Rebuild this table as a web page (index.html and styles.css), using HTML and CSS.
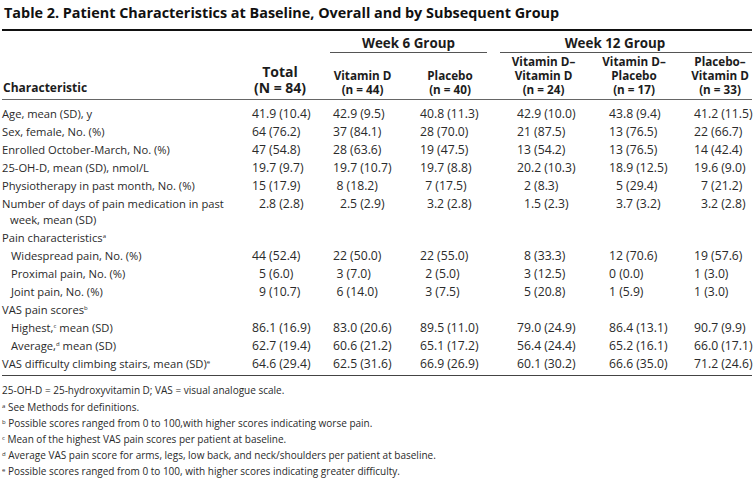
FILE: index.html
```html
<!DOCTYPE html>
<html lang="en">
<head>
<meta charset="utf-8">
<title>Table 2</title>
<link rel="stylesheet" href="styles.css">
</head>
<body>
<div class="page">
  <h1 class="title">Table 2. Patient Characteristics at Baseline, Overall and by Subsequent Group</h1>
  <table class="tbl">
    <colgroup>
      <col class="c-char"><col class="c-total"><col class="c-vd6"><col class="c-p6"><col class="c-vdvd"><col class="c-vdp"><col class="c-pvd">
    </colgroup>
    <thead>
      <tr class="grp-row">
        <th></th><th></th>
        <th colspan="2" class="grp grp6"><div class="grp-label">Week 6 Group</div></th>
        <th colspan="3" class="grp grp12"><div class="grp-label">Week 12 Group</div></th>
      </tr>
      <tr class="sub-row">
        <th class="h-char">Characteristic</th>
        <th class="h-total">Total<br>(N = 84)</th>
        <th class="h-sub">Vitamin D<br>(n = 44)</th>
        <th class="h-sub">Placebo<br>(n = 40)</th>
        <th class="h-sub">Vitamin D–<br>Vitamin D<br>(n = 24)</th>
        <th class="h-sub">Vitamin D–<br>Placebo<br>(n = 17)</th>
        <th class="h-sub h-last">Placebo–<br>Vitamin D<br>(n = 33)</th>
      </tr>
    </thead>
    <tbody>
      <tr class="first"><td>Age, mean (SD), y</td><td>41.9 (10.4)</td><td>42.9 (9.5)</td><td>40.8 (11.3)</td><td>42.9 (10.0)</td><td>43.8 (9.4)</td><td>41.2 (11.5)</td></tr>
      <tr><td>Sex, female, No. (%)</td><td>64 (76.2)</td><td>37 (84.1)</td><td>28 (70.0)</td><td>21 (87.5)</td><td>13 (76.5)</td><td>22 (66.7)</td></tr>
      <tr><td>Enrolled October-March, No. (%)</td><td>47 (54.8)</td><td>28 (63.6)</td><td>19 (47.5)</td><td>13 (54.2)</td><td>13 (76.5)</td><td>14 (42.4)</td></tr>
      <tr><td>25-OH-D, mean (SD), nmol/L</td><td>19.7 (9.7)</td><td>19.7 (10.7)</td><td>19.7 (8.8)</td><td>20.2 (10.3)</td><td>18.9 (12.5)</td><td>19.6 (9.0)</td></tr>
      <tr><td>Physiotherapy in past month, No. (%)</td><td>15 (17.9)</td><td><span class="ph">8 (18.2)</span></td><td><span class="pq">7 (17.5)</span></td><td><span class="p1">2 (8.3)</span></td><td><span class="p1">5 (29.4)</span></td><td><span class="p1">7 (21.2)</span></td></tr>
      <tr><td class="wrap">Number of days of pain medication in past week, mean (SD)</td><td><span class="p1">2.8 (2.8)</span></td><td><span class="p1">2.5 (2.9)</span></td><td><span class="p1">3.2 (2.8)</span></td><td><span class="p1">1.5 (2.3)</span></td><td><span class="p1">3.7 (3.2)</span></td><td><span class="p1">3.2 (2.8)</span></td></tr>
      <tr><td>Pain characteristics<sup>a</sup></td><td></td><td></td><td></td><td></td><td></td><td></td></tr>
      <tr><td class="ind">Widespread pain, No. (%)</td><td>44 (52.4)</td><td>22 (50.0)</td><td>22 (55.0)</td><td><span class="p1">8 (33.3)</span></td><td>12 (70.6)</td><td>19 (57.6)</td></tr>
      <tr><td class="ind">Proximal pain, No. (%)</td><td><span class="p1">5 (6.0)</span></td><td><span class="ph">3 (7.0)</span></td><td><span class="pq">2 (5.0)</span></td><td><span class="p1">3 (12.5)</span></td><td>0 (0.0)</td><td>1 (3.0)</td></tr>
      <tr><td class="ind">Joint pain, No. (%)</td><td><span class="p1">9 (10.7)</span></td><td><span class="ph">6 (14.0)</span></td><td><span class="pq">3 (7.5)</span></td><td><span class="p1">5 (20.8)</span></td><td>1 (5.9)</td><td>1 (3.0)</td></tr>
      <tr><td>VAS pain scores<sup>b</sup></td><td></td><td></td><td></td><td></td><td></td><td></td></tr>
      <tr><td class="ind">Highest,<sup>c</sup> mean (SD)</td><td>86.1 (16.9)</td><td>83.0 (20.6)</td><td>89.5 (11.0)</td><td>79.0 (24.9)</td><td>86.4 (13.1)</td><td>90.7 (9.9)</td></tr>
      <tr><td class="ind">Average,<sup>d</sup> mean (SD)</td><td>62.7 (19.4)</td><td>60.6 (21.2)</td><td>65.1 (17.2)</td><td>56.4 (24.4)</td><td>65.2 (16.1)</td><td>66.0 (17.1)</td></tr>
      <tr class="last"><td>VAS difficulty climbing stairs, mean (SD)<sup>e</sup></td><td>64.6 (29.4)</td><td>62.5 (31.6)</td><td>66.9 (26.9)</td><td>60.1 (30.2)</td><td>66.6 (35.0)</td><td>71.2 (24.6)</td></tr>
    </tbody>
  </table>
  <div class="notes">
    <p class="abbr">25-OH-D = 25-hydroxyvitamin D; VAS = visual analogue scale.</p>
    <p><sup>a</sup> See Methods for definitions.</p>
    <p><sup>b</sup> Possible scores ranged from 0 to 100,with higher scores indicating worse pain.</p>
    <p><sup>c</sup> Mean of the highest VAS pain scores per patient at baseline.</p>
    <p><sup>d</sup> Average VAS pain score for arms, legs, low back, and neck/shoulders per patient at baseline.</p>
    <p><sup>e</sup> Possible scores ranged from 0 to 100, with higher scores indicating greater difficulty.</p>
  </div>
</div>
</body>
</html>
```

FILE: styles.css
```css
html, body {
  margin: 0;
  padding: 0;
  background: #ffffff;
}

body {
  font-family: "Open Sans", "Noto Sans", "DejaVu Sans", sans-serif;
  color: #2a2a2a;
}

.page {
  width: 750px;
  padding: 0 2px;
}

.title {
  margin: 0;
  padding: 4px 0 0 2px;
  box-sizing: border-box;
  font-size: 14.4px;
  line-height: 18px;
  font-weight: 700;
  color: #111;
  border-bottom: 2.5px solid #111;
  height: 31px;
}

.tbl {
  width: 750px;
  border-collapse: collapse;
  table-layout: fixed;
  font-size: 11px;
}

.c-char { width: 238px; }
.c-total { width: 80px; }
.c-vd6 { width: 85px; }
.c-p6 { width: 90px; }
.c-vdvd { width: 97px; }
.c-vdp { width: 84px; }
.c-pvd { width: 76px; }

th {
  padding: 0;
  font-weight: 700;
  color: #1c1c1c;
}

.grp-row th {
  padding-top: 3px;
  height: 18px;
  vertical-align: top;
}

.grp-label {
  font-size: 13.4px;
  line-height: 18px;
  text-align: center;
  border-bottom: 1.5px solid #555;
}

.grp6 { padding-left: 10px; padding-right: 8px; }
.grp12 { padding-left: 5px; }
.grp-row th.grp12 .grp-label { padding-right: 22px; }

.sub-row th {
  vertical-align: bottom;
  padding-top: 1px;
  padding-bottom: 3px;
  border-bottom: 1.5px solid #666;
}

.h-sub {
  font-size: 11.7px;
  line-height: 14px;
  text-align: center;
}

.h-last { padding-left: 12px; }

.h-char {
  font-size: 12px;
  line-height: 16px;
  text-align: left;
  padding-left: 1px;
}

.h-total {
  font-size: 14px;
  line-height: 16px;
  text-align: center;
}

td {
  padding: 1px 0;
  line-height: 16px;
  vertical-align: top;
  white-space: nowrap;
  font-size: 12.2px;
}

td:first-child {
  white-space: normal;
  padding-left: 0;
  font-size: 11.2px;
}

tbody tr.first td { padding-top: 6px; }
tbody tr.last td { padding-bottom: 3px; border-bottom: 1.5px solid #444; }

td:nth-child(2) { padding-left: 12px; }
td:nth-child(3) { padding-left: 13px; }
td:nth-child(4) { padding-left: 15px; }
td:nth-child(5) { padding-left: 22px; }
td:nth-child(6) { padding-left: 17px; }
td:nth-child(7) { padding-left: 18px; }

.wrap { padding-left: 8px !important; padding-right: 14px; text-indent: -8px; }

.ind { padding-left: 9px !important; }

.p1 { padding-left: 1ch; }
.ph { padding-left: 0.5ch; }
.pq { padding-left: 0.75ch; }

sup {
  font-size: 6px;
  line-height: 0;
  vertical-align: 4px;
}

.notes {
  padding-top: 6px;
  font-size: 10px;
  line-height: 16px;
  color: #2a2a2a;
}

.notes p {
  margin: 0;
}

.notes p.abbr {
  margin-bottom: 1px;
}

.notes sup {
  font-size: 6px;
  vertical-align: 3px;
}
```
